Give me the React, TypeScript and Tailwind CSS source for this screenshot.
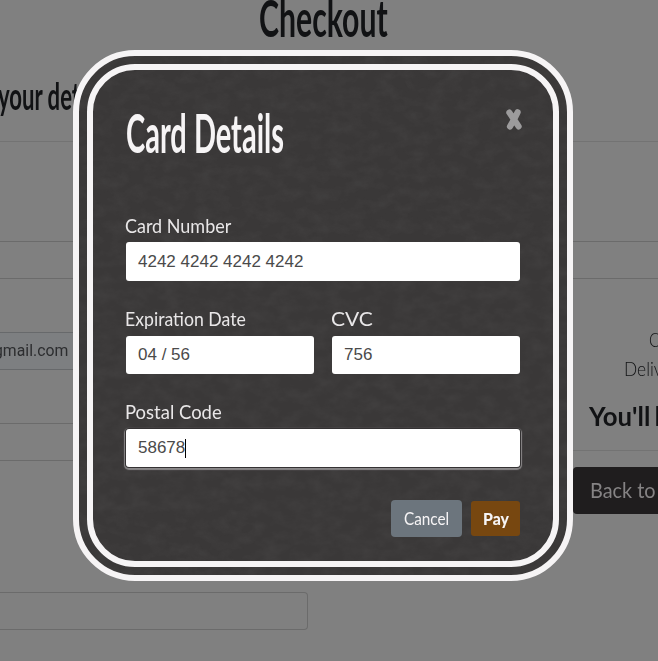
import { useLayoutEffect, useRef, useState } from "react";

type FitProps = { children: string; width: number; className?: string };

// Narrow lettering: squeezes a line of text to a given width.
function Fit({ children, width, className = "" }: FitProps) {
  const ref = useRef<HTMLSpanElement>(null);
  const [scale, setScale] = useState(1);
  useLayoutEffect(() => {
    if (ref.current) setScale(width / ref.current.offsetWidth);
  }, [width]);
  return (
    <span className="block" style={{ width }}>
      <span
        ref={ref}
        className={`inline-block origin-left whitespace-nowrap ${className}`}
        style={{ transform: `scaleX(${scale})` }}
      >
        {children}
      </span>
    </span>
  );
}

function Chalk() {
  return (
    <svg className="pointer-events-none absolute inset-0 h-full w-full opacity-[0.04]" aria-hidden="true">
      <filter id="chalk" x="0" y="0" width="100%" height="100%">
        <feTurbulence type="fractalNoise" baseFrequency="0.06 0.09" numOctaves="5" seed="8" />
        <feColorMatrix values="0 0 0 0 0.7  0 0 0 0 0.7  0 0 0 0 0.7  1.8 0 0 0 -0.6" />
      </filter>
      <rect width="100%" height="100%" filter="url(#chalk)" />
    </svg>
  );
}

type FieldProps = { label: string; width: number; value: string; focused?: boolean; short?: boolean };

function Field({ label, width, value, focused, short }: FieldProps) {
  return (
    <div className="flex-1">
      <div className={`-mt-[2px] -ml-px text-[20px] leading-[24px] text-[#e9e7e8] ${short ? "h-[30px]" : "h-[29px]"}`}>
        <Fit width={width}>{label}</Fit>
      </div>
      <div
        className={`flex items-center rounded-[3px] bg-white px-3 font-['Liberation_Sans',sans-serif] text-[17px] text-[#4a4a4a] ${
          short ? "h-[38px]" : "h-[39px]"
        } ${focused ? "shadow-[0_0_0_1px_#343233,0_1px_1px_2px_#8b898a]" : ""}`}
      >
        {value}
        {focused && <span className="h-[19px] w-px bg-black" />}
      </div>
    </div>
  );
}

export default function App() {
  return (
    <div className="relative h-[661px] w-[658px] overflow-hidden bg-[#808080] font-[Lato,sans-serif] text-[#111214]">
      <div className="flex h-[141px] flex-col">
        <div className="ml-[259px] h-[74px] text-[52px] leading-[34px] font-bold">
          <Fit width={129}>Checkout</Fit>
        </div>
        <div className="-ml-[2px] text-[38px] leading-[43px] font-bold">
          <Fit width={114}>your details</Fit>
        </div>
      </div>
      <div className="h-[100px] border-t border-[#737373]" />
      <div className="h-[38px] border-y border-[#6b6b6b]" />
      <div className="flex">
        <div className="w-[308px]">
          <div className="mt-[53px] flex h-[38px] items-center border-y border-[#67696b] bg-[#7d7f81] font-[Roboto,sans-serif] text-[16px] text-[#2c2d2f]">
            <span className="-ml-[6px]">
              <Fit width={74}>gmail.com</Fit>
            </span>
          </div>
          <div className="mt-[53px] h-[38px] border-y border-[#6b6b6b]" />
          <div className="mt-[131px] h-[38px] rounded-r-[4px] border border-l-0 border-[#6b6b6b]" />
        </div>
        <div className="ml-[265px] w-[85px] shrink-0 overflow-hidden">
          <div className="mt-[47px] ml-[76px] text-[19px] leading-[28px] font-light">
            <Fit width={70}>Cart Total:</Fit>
          </div>
          <div className="ml-[51px] text-[20px] leading-[28px] font-light">
            <Fit width={66}>Delivery:</Fit>
          </div>
          <div className="mt-[16px] ml-[16px] flex h-[52px] gap-[5px] text-[27px] leading-[35px] font-bold">
            <Fit width={61}>You'll</Fit>
            <Fit width={22}>be</Fit>
          </div>
          <div className="border-t border-[#737373]" />
        </div>
      </div>
      <div className="absolute top-[467px] left-[573px] h-[47px] w-[100px] rounded-[4px] bg-[#1f1d1e] pl-[17px] text-[22px] leading-[46px] text-[#858384]">
        <Fit width={66}>Back to</Fit>
      </div>

      <div className="absolute top-[50px] left-[73px] h-[531px] w-[500px] overflow-hidden rounded-[62px] border-[6px] border-[#f6f4f5] bg-[#3a3838] p-[8px]">
        <Chalk />
        <div className="relative h-full rounded-[48px] border-[6px] border-[#f6f4f5] px-[33px] pt-[35px]">
          <div className="flex h-[110px] justify-between">
            <div className="-mt-[4px] text-[54px] leading-[64px] font-bold text-[#f6f4f5]">
              <Fit width={158}>Card Details</Fit>
            </div>
            <svg className="-mr-[2px] mt-[4px] h-[21px] w-[16px]" viewBox="0 0 16 21" fill="none" stroke="#9c9b9c" strokeWidth="6.2" strokeLinecap="round">
              <path d="M3.4 3.6 L8 10.5 L12.6 17.4 M11.6 3.3 L8 10.5 L4 17.6" />
            </svg>
          </div>
          <div className="flex">
            <Field label="Card Number" width={106} value="4242 4242 4242 4242" />
          </div>
          <div className="mt-[27px] flex gap-[18px]">
            <Field label="Expiration Date" width={121} value="04 / 56" short />
            <Field label="CVC" width={42} value="756" short />
          </div>
          <div className="mt-[27px] flex">
            <Field label="Postal Code" width={97} value="58678" focused short />
          </div>
          <div className="mt-[33px] flex items-center justify-end gap-[9px] text-[17px] leading-[20px] text-[#f6f4f5]">
            <div className="flex h-[37px] w-[71px] items-center justify-center rounded-[4px] bg-[#6c757d]">
              <Fit width={45}>Cancel</Fit>
            </div>
            <div className="flex h-[35px] w-[49px] items-center justify-center rounded-[3px] bg-[#774710] font-black">
              <Fit width={26}>Pay</Fit>
            </div>
          </div>
        </div>
      </div>
    </div>
  );
}
